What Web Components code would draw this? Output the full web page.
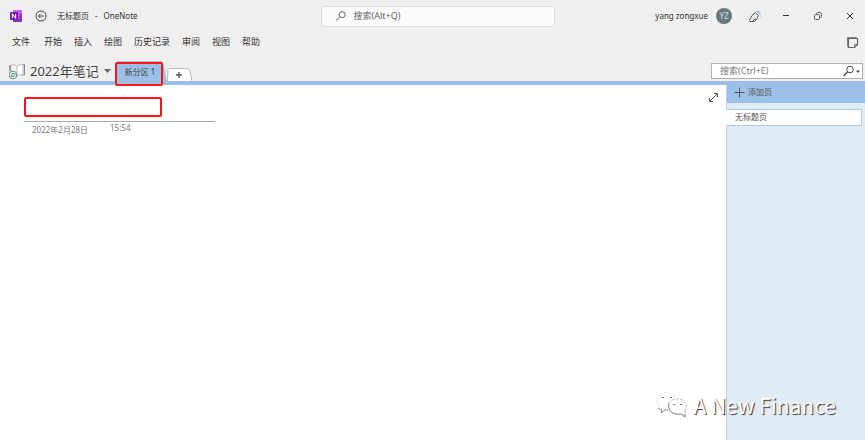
<!DOCTYPE html>
<html lang="zh-CN">
<head>
<meta charset="utf-8">
<title>无标题页 - OneNote</title>
<style>
html, body { height: 100%; margin: 0; }
body { font-family: "Noto Sans", "Noto Sans CJK SC", sans-serif; font-size: 9px; line-height: 12px; color: #333; overflow: hidden; }
</style>
</head>
<body>
<note-app></note-app>
<script>
const base = `<style>
*{box-sizing:border-box}
button,input{font:inherit;color:inherit;background:none;border:0;padding:0;margin:0;outline:0}
button{white-space:nowrap}
svg{display:block;flex:none;fill:none;stroke:currentColor}
input{line-height:14px}
input::placeholder{color:inherit;opacity:1}
</style>`;
function define(name, html) {
  const t = document.createElement('template');
  t.innerHTML = base + html;
  customElements.define(name, class extends HTMLElement {
    constructor() {
      super();
      this.attachShadow({ mode: 'open' }).append(t.content.cloneNode(true));
    }
  });
}

define('title-bar', `<style>
:host{display:grid;grid-template-columns:310fr 234px 301fr;align-items:center;height:32px;padding:0 9px 0 10px}
.left,.right{display:flex;align-items:center;font-size:8px}
.left button{margin:0 10px 0 13px}
.name{display:flex;gap:6px}
.right{justify-content:flex-end}
.search{display:flex;align-items:center;height:21px;padding:0 12px 0 13px;gap:7px;background:#fbfbfb;border:1px solid #dcdcdc;border-radius:3px;color:#666}
.search input{flex:1;min-width:0}
.avatar{display:grid;place-items:center;width:16px;height:16px;margin:0 16px 0 8px;border-radius:50%;background:#66787c;color:#d5dfe1}
.controls{display:flex;gap:20px;margin-left:19px}
</style>
<div class="left">
  <svg width="12" height="12" viewBox="0 0 12 12" style="stroke:none" role="img" aria-label="OneNote"><rect x="3" width="9" height="12" rx="1" fill="#c865e6"/><path d="M9 3h3v3H9z" fill="#a93fd0"/><path d="M9 6h3v3H9z" fill="#8f32be"/><path d="M3 9h9v2q0 1-1 1H4q-1 0-1-1z" fill="#8a2fb8"/><rect y="2" width="8" height="8" rx="1" fill="#7719aa"/><path d="M2.4 8V4l3.2 4V4" style="stroke:#fff" stroke-width="1.1"/></svg>
  <button aria-label="返回"><svg width="12" height="12" viewBox="0 0 12 12" style="stroke:#444"><circle cx="6" cy="6" r="5"/><path d="M9 6H3.5M5.7 3.7 3.4 6l2.3 2.3"/></svg></button>
  <span class="name"><span>无标题页</span><span>-</span><span>OneNote</span></span>
</div>
<label class="search"><svg width="12" height="12" viewBox="0 0 12 12"><circle cx="7.2" cy="4.6" r="3"/><path d="M5 6.8 1 10.5"/></svg><input type="search" placeholder="搜索(Alt+Q)" aria-label="搜索"></label>
<div class="right">
  <span>yang zongxue</span><span class="avatar">YZ</span>
  <button aria-label="墨迹"><svg width="13" height="13" viewBox="0 0 13 13" style="stroke:#555"><path d="M1.5 10.5 3.500 6l4-3.500 3 3-2 4-2 2H2z"/><path d="M5 11.500q0-2.500 3-2.500"/><path d="M9 1v1m2-1-1 2m2.500 0L11 4m1 2h.8" style="stroke:#51a5d8"/></svg></button>
  <div class="controls">
    <button aria-label="最小化"><svg width="12" height="12" viewBox="0 0 12 12"><path d="M3 5.5h6"/></svg></button>
    <button aria-label="还原"><svg width="12" height="12" viewBox="0 0 12 12" style="stroke:#555"><rect x="2.500" y="4.500" width="5" height="5" rx="1"/><path d="M4.500 3.500q0-1 1-1h2q2 0 2 2v2q0 1-1 1"/></svg></button>
    <button aria-label="关闭"><svg width="12" height="12" viewBox="0 0 12 12"><path d="m3 3 6 6m0-6-6 6"/></svg></button>
  </div>
</div>`);

define('menu-bar', `<style>
:host{display:flex;align-items:center;height:24px;padding:0 6px 4px 12px}
nav{display:flex;gap:12px;flex:1}
nav button:first-child{margin-right:2px}
</style>
<nav><button>文件</button><button>开始</button><button>插入</button><button>绘图</button><button>历史记录</button><button>审阅</button><button>视图</button><button>帮助</button></nav>
<button aria-label="便笺"><svg width="13" height="13" viewBox="0 0 13 13" style="stroke:#666"><path d="M2.500 2.500h9v6l-3 3h-6z" stroke-width="1.200"/><path d="M1.500 10.500v-9h9M8.500 11V8.500H11" stroke-width=".8"/></svg></button>`);

define('section-tabs', `<style>
:host{display:flex;height:29px;padding:0 2px 0 9px;border-bottom:4px solid #9bbfe6}
.book{display:flex;align-items:center;gap:5px;height:25px;padding-top:4px;font-size:13px;line-height:18px;color:#444}
.wrap{position:relative;display:flex;align-items:flex-end;margin-left:6px}
.tab{height:20px;width:50px;padding:2px 0 0 8px;text-align:left;font-size:8px;background:#9bbfe6;color:#444;clip-path:polygon(0 0,90% 0,94% 15%,100% 100%,0 100%)}
.mark{position:absolute;left:-2px;top:6px;width:48px;height:24px;border:2px solid #fb1714;border-radius:2px;pointer-events:none}
.add{align-self:flex-end}
.search{display:flex;align-items:center;width:152px;height:16px;margin:7px 0 0 auto;padding:0 2px 0 8px;background:#fff;border:1px solid #b0b0b0;color:#777}
.search input{flex:1;min-width:0}
</style>
<button class="book"><svg width="16" height="18" viewBox="0 0 16 18"><path d="M8 4Q5 2 2 3v10q3-1 6 1 3-2 6-1V3q-3-1-6 1v10" fill="#fff" style="stroke:#aaa" stroke-width=".8"/><path d="M14 2.500h1.500V13H14" style="stroke:#888"/><path d="M1 3v3" style="stroke:#ea6a51" stroke-width="1.600"/><path d="M1 6v3" style="stroke:#5d93cf" stroke-width="1.600"/><circle cx="4" cy="13" r="3.900" fill="#edf6f1" style="stroke:#579778"/><path d="M2 12.500q2-2.500 4 0M4.500 12.500H6V11M6 13.700q-2 2.300-4 0M3.500 13.700H2V15" style="stroke:#579778" stroke-width=".9"/></svg><span>2022年笔记</span><svg width="7" height="5" viewBox="0 0 7 5" style="stroke:none"><path d="M0 1h7L3.500 5z" fill="#666"/></svg></button>
<div class="wrap"><button class="tab">新分区 1</button><span class="mark"></span></div>
<button class="add" aria-label="新建分区"><svg width="25" height="13" viewBox="0 0 25 13"><path d="M.5 13 1 1.500Q1 .5 2 .5h18q2 0 3 3L25 13" fill="#fff" stroke="#bbb"/><path d="M9 7h6M12 4v6" stroke="#555" stroke-width="1.400"/></svg></button>
<label class="search"><input type="search" placeholder="搜索(Ctrl+E)" aria-label="搜索笔记"><svg width="18" height="12" viewBox="0 0 18 12" style="stroke:#444"><circle cx="8" cy="4.500" r="3.300"/><path d="M5.500 7 1.500 11" stroke-width="1.300"/><path d="M14 5.500h4l-2 2.500z" fill="#444" stroke="none"/></svg></label>`);

define('note-page', `<style>
:host{display:flex;justify-content:space-between;align-items:flex-start;background:#fff;padding:7px 7px 0 24px}
header{width:191px;padding-top:5px}
.title{display:block;width:138px;height:20px;border:2px solid #fb1714;border-radius:2px;padding:0 6px;font-size:12px}
.stamp{display:flex;gap:22px;margin-top:4px;padding:1px 8px;border-top:1px solid #aaa;font-size:8px;line-height:10px;color:#777}
.date{padding-top:2px}
</style>
<header><input class="title" aria-label="页面标题"><div class="stamp"><time class="date">2022年2月28日</time><time>15:54</time></div></header>
<button aria-label="全屏"><svg width="11" height="11" viewBox="0 0 11 11" style="stroke:#555"><path d="M2 9 9 2M6 1.500h3.500V5M1.500 6v3.500H5"/></svg></button>`);

define('page-list', `<style>
:host{display:block;background:#e1ebf6;border-left:1px solid #b8d2f0;color:#555;font-size:8px}
.add{display:flex;align-items:center;gap:3px;width:100%;height:18px;padding:0 7px 4px;background:#9bbfe6}
.page{display:block;width:calc(100% - 2px);height:17px;margin:6px 0 0 -1px;padding:0 0 2px 8px;text-align:left;background:#fff;border:1px solid #aecbed;border-left-color:#fff}
</style>
<button class="add"><svg width="11" height="11" viewBox="0 0 11 11"><path d="M.5 5.500h10M5.500.5v10"/></svg>添加页</button>
<button class="page">无标题页</button>`);

define('channel-mark', `<style>
:host{display:flex;align-items:center;gap:5px;font-family:"Noto Sans CJK SC",sans-serif;font-size:21px;line-height:28px;color:#fff;text-shadow:1px 1px 1px #333;pointer-events:none;white-space:nowrap}
</style>
<svg width="32" height="28" viewBox="0 0 32 28" stroke-width=".8" style="stroke:#aaa"><g><path d="M12 19H9l-4 3 1-4C-1 13 0 5 7 2q9-3 14 7" fill="#fff" stroke-dasharray="1 2"/><path d="M29 20q4-7-3-11-8-3-13 3c-2 9 6 13 12 11l4 3z" fill="#fff" stroke-dasharray="3 1"/><path d="M2 17q2 2 4 2l-1 3 4-3h3M13 12q-2 9 7 11h5l4 3v-3" style="stroke:#777"/></g><path d="M6 7q1-2 2 0m6 0q1-2 2 0m1 7q1-2 2 0m5 0q1-2 2 0" style="stroke:#555"/></svg><slot></slot>`);

define('note-app', `<style>
:host{position:relative;display:grid;grid-template-rows:auto auto auto 1fr;height:100%;background:#efefef}
main{display:grid;grid-template-columns:1fr 139px;min-height:0}
channel-mark{position:absolute;right:29px;bottom:21px}
</style>
<title-bar></title-bar><menu-bar></menu-bar><section-tabs></section-tabs>
<main><note-page></note-page><page-list></page-list></main>
<channel-mark>A New Finance</channel-mark>`);
</script>
</body>
</html>
